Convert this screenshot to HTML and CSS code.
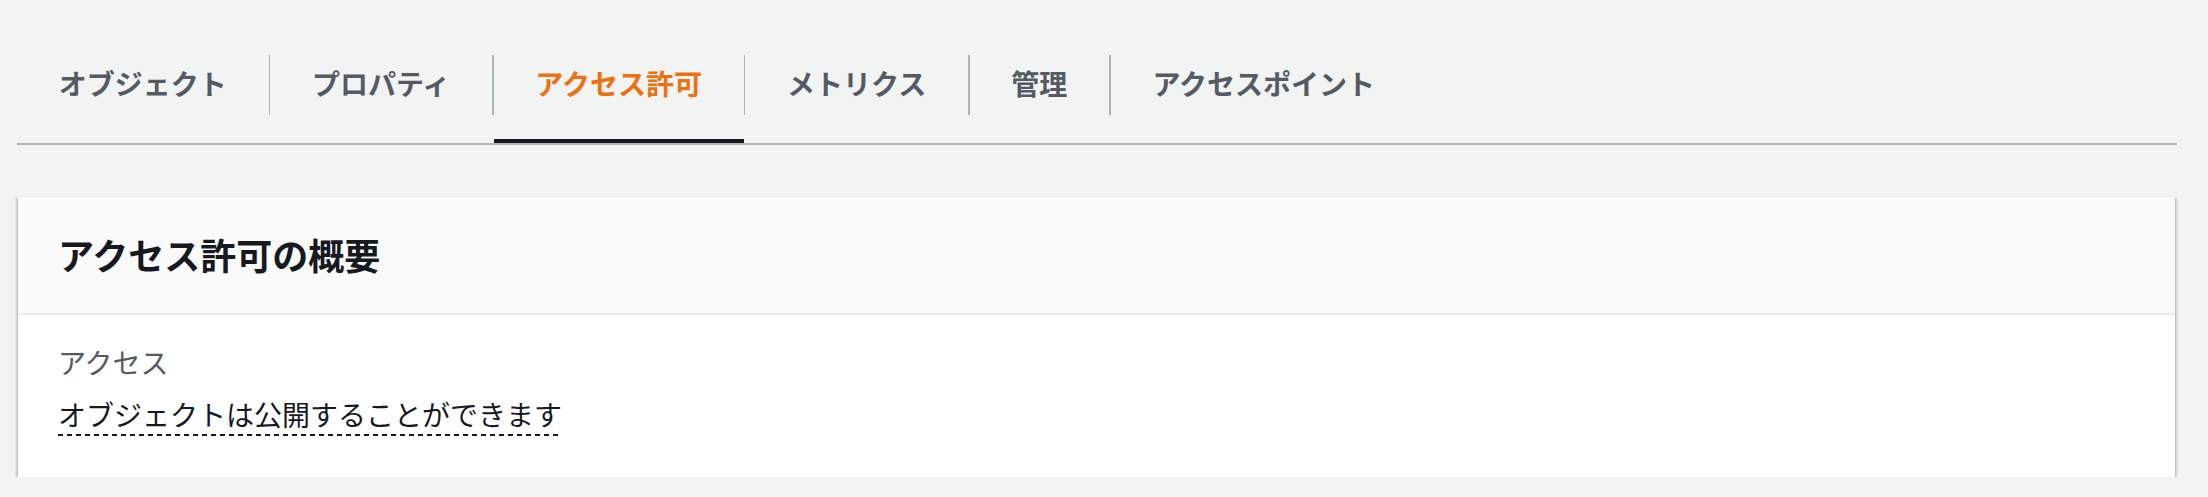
FILE: index.html
```html
<!DOCTYPE html>
<html lang="ja">
<head>
<meta charset="utf-8">
<title>アクセス許可</title>
<link rel="stylesheet" href="styles.css">
</head>
<body>
<div class="page">
  <nav class="tabs">
    <ul class="tab-list">
      <li class="tab"><a class="tab-link">オブジェクト</a></li>
      <li class="sep"></li>
      <li class="tab"><a class="tab-link">プロパティ</a></li>
      <li class="sep"></li>
      <li class="tab active"><a class="tab-link">アクセス許可</a></li>
      <li class="sep"></li>
      <li class="tab"><a class="tab-link">メトリクス</a></li>
      <li class="sep"></li>
      <li class="tab"><a class="tab-link">管理</a></li>
      <li class="sep"></li>
      <li class="tab"><a class="tab-link">アクセスポイント</a></li>
    </ul>
  </nav>
  <section class="card">
    <header class="card-header">
      <h2 class="card-title">アクセス許可の概要</h2>
    </header>
    <div class="card-body">
      <div class="label">アクセス</div>
      <div class="value">オブジェクトは公開することができます</div>
    </div>
  </section>
</div>
</body>
</html>
```

FILE: styles.css
```css
html, body {
  margin: 0;
  padding: 0;
  background: #f2f3f3;
}

body {
  font-family: "Noto Sans CJK JP", "Noto Sans", sans-serif;
  color: #16191f;
}

.page {
  width: 2160px;
  padding-left: 17px;
}

.tab-list {
  display: flex;
  margin: 0;
  padding: 0;
  list-style: none;
  border-bottom: 2px solid #aab7b8;
}

.tab {
  padding-top: 55px;
  padding-bottom: 24px;
  border-bottom: 4px solid transparent;
}

.tab.active {
  border-bottom-color: #16191f;
}

.tab-link {
  display: block;
  height: 56px;
  padding: 0 41.8px 4px;
  line-height: 56px;
  font-size: 28px;
  font-weight: 700;
  color: #545b64;
  white-space: nowrap;
}

.tab.active .tab-link {
  color: #ec7211;
}

.sep {
  width: 1.5px;
  height: 60px;
  margin-top: 55px;
  background: #aab7b8;
}

.card {
  margin: 51px 2px 0 1px;
  background: #ffffff;
  border-top: 1px solid #eaeded;
  box-shadow: 0 2px 2px 0 rgba(0, 28, 36, 0.3),
              2px 2px 2px 0 rgba(0, 28, 36, 0.15),
              -2px 2px 2px 0 rgba(0, 28, 36, 0.15);
}

.card-header {
  background: #fafafa;
  padding: 35px 40px 37px;
  border-bottom: 2px solid #eaeded;
}

.card-title {
  margin: 0;
  font-size: 36px;
  line-height: 44px;
  font-weight: 700;
  color: #16191f;
}

.card-body {
  padding: 27px 40px 41px;
}

.label {
  font-size: 28px;
  line-height: 40px;
  color: #545b64;
}

.value {
  width: fit-content;
  margin-top: 12px;
  font-size: 28px;
  line-height: 40px;
  color: #16191f;
  padding-bottom: 2px;
  background-image: repeating-linear-gradient(to right, #16191f 0 5px, transparent 5px 9px);
  background-size: 100% 2px;
  background-position: left bottom;
  background-repeat: no-repeat;
}
```
